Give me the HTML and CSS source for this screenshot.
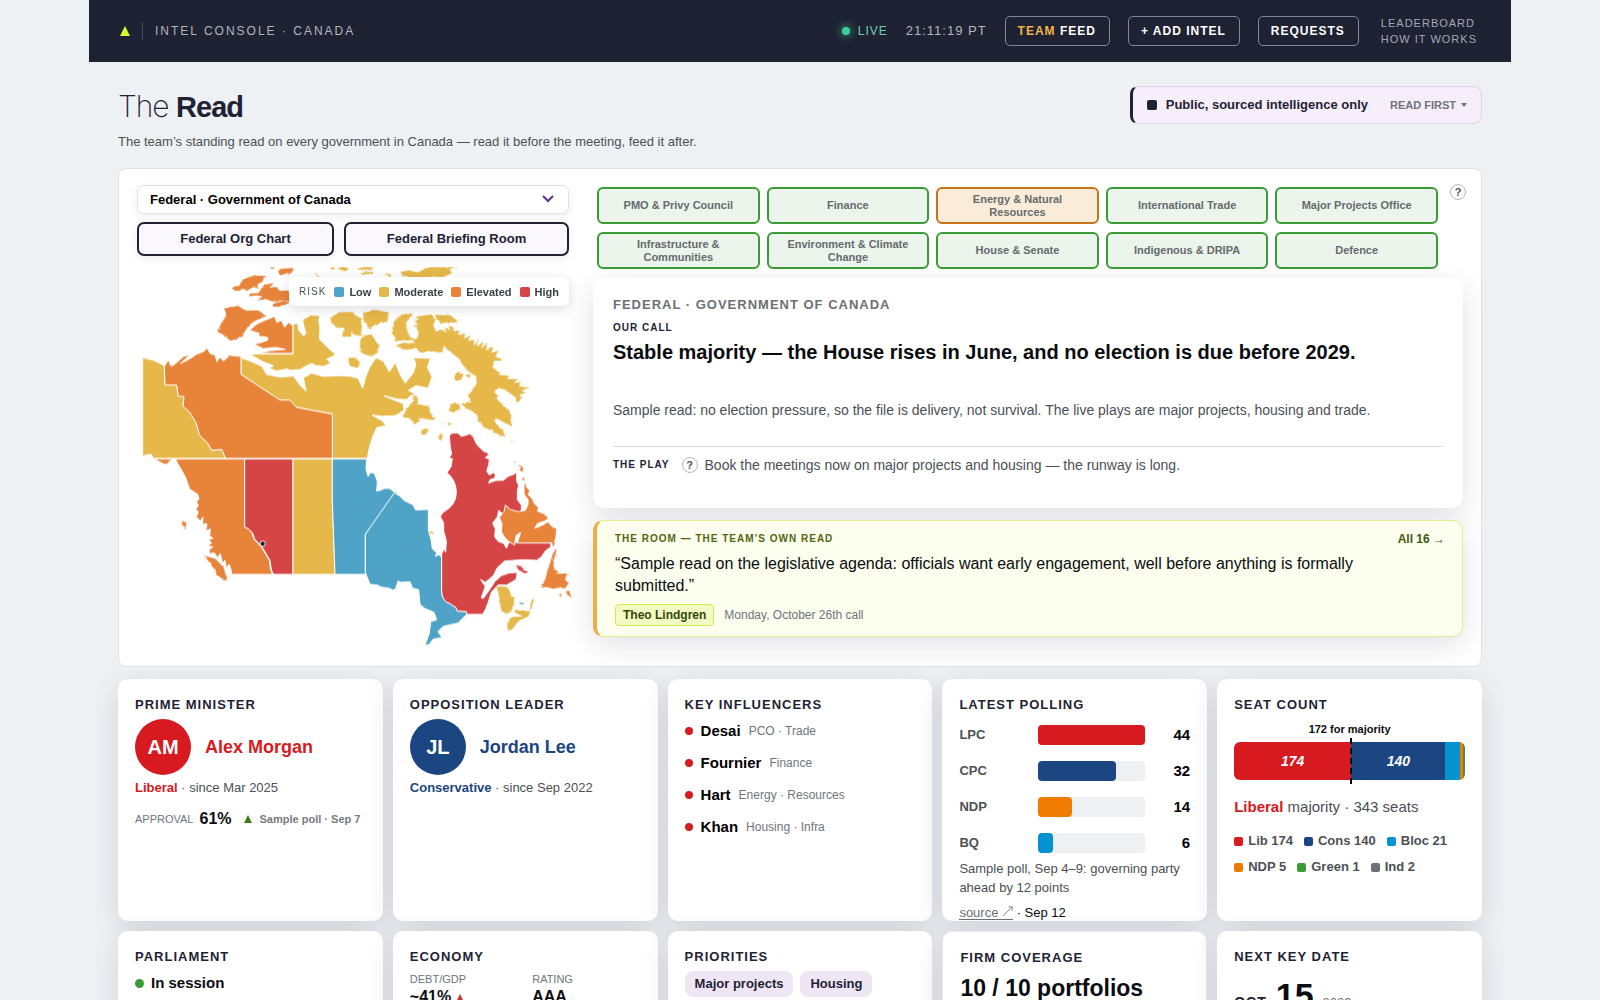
FILE: index.html
```html
<!DOCTYPE html>
<html lang="en">
<head>
<meta charset="utf-8">
<meta name="viewport" content="width=device-width, initial-scale=1">
<title>Intel Console · Canada</title>
<link rel="stylesheet" href="styles.css">
</head>
<body>
<div class="shell">
  <header class="topbar">
    <div class="brand">
      <svg class="brand-mark" viewBox="0 0 10 10" aria-hidden="true"><path d="M5 0 10 10H0Z"/></svg>
      <span class="brand-name">INTEL CONSOLE · CANADA</span>
    </div>
    <div class="top-actions">
      <span class="live"><i class="live-dot"></i>LIVE</span>
      <span class="clock">21:11:19 PT</span>
      <button class="top-btn" type="button"><span class="gold">TEAM</span> FEED</button>
      <button class="top-btn" type="button">+ ADD INTEL</button>
      <button class="top-btn" type="button">REQUESTS</button>
      <nav class="top-links"><a href="#leaderboard">LEADERBOARD</a><a href="#how">HOW IT WORKS</a></nav>
    </div>
  </header>

  <main class="content">
    <div class="intro">
      <div>
        <h1>The <b>Read</b></h1>
        <p class="lede">The team’s standing read on every government in Canada — read it before the meeting, feed it after.</p>
      </div>
      <button class="notice" type="button">
        <i class="notice-mark"></i><span class="notice-text">Public, sourced intelligence only</span>
        <span class="notice-more">READ FIRST</span><i class="caret"></i>
      </button>
    </div>

    <section class="panel">
      <div class="left">
        <div class="picker">
          <select aria-label="Government"><option>Federal · Government of Canada</option></select>
          <svg class="chevron" viewBox="0 0 12 8" aria-hidden="true"><path d="M1 1l5 5 5-5"/></svg>
        </div>
        <div class="pair">
          <button class="outline" type="button">Federal Org Chart</button>
          <button class="outline" type="button">Federal Briefing Room</button>
        </div>
        <div class="map">
          <svg class="canada" viewBox="51 18 1296 1152" role="img" aria-label="Risk by province and territory">
            <defs>
              <filter id="coast" x="-5%" y="-5%" width="110%" height="110%">
                <feTurbulence type="fractalNoise" baseFrequency="0.09" numOctaves="2" seed="4"/>
                <feDisplacementMap in="SourceGraphic" scale="8" xChannelSelector="R" yChannelSelector="G"/>
              </filter>
            </defs>
            <g filter="url(#coast)">
              <g class="elevated">
                <path d="M474 30l10-7 35-2 0 10-10 8-30 2zM448 14l12 2 4 8-10-2zM338 78l20-4 12-20 30-10 34 0-6 18-16 8 2 12-14-4-20 12-8-8-16 8-14-2zM388 98l28-2-2 6-26 4zM412 100l20-28 30-6-14 14 18-2 14 12 24-2 10 8-4 26-24-4-26 4-24-8-24 4 14-12-16-2zM460 128l30-8 18 4-30 14-20-2z"/>
                <path d="M312 142L355 135 378 150 390 148 415 148 438 165 400 182 378 205 366 228 330 240 318 226 292 212 302 190 318 165Z"/>
              </g>
              <g class="moderate">
                <path d="M582 34l4 2 14 10-6 2zM630 20l8-2 8 4-10 4zM654 22l14-6 18 6-6 8-18 0zM710 22l30-4 24 2-12 6-38 0zM722 34l36-2 4 6-36 2zM796 38l14 2 6 8-12-2zM842 32l24-4 28 6 22-12 18-4h85l-28 4 2 16-30 12-28-4-18 10-22-4-14 6-8-10-28-4z"/>
                <path d="M632 170l24-16 40-2 18 16 12 4-6 20-26 14 0 20-28 0 6-26-22 0-16-16zM730 155l34-8 42 7-4 28-36 8-18 14-16-22zM720 240l8-16 26-4 12 18 12 16-6 22-20 10-28-10-4-20zM690 170l16-4 20 24-4 36-22-6-10-14zM684 290l22 0 14 14-8 18-24-8z"/>
                <path transform="translate(690 0)" d="M125 215L130 188 142 168 162 160 190 158 180 170 168 185 170 205 178 222 192 236 202 232 206 215 200 198 186 196 206 190 190 180 208 176 196 168 222 163 244 160 256 175 250 195 258 212 272 205 290 215 284 200 300 205 296 194 312 200 308 208 330 210 326 222 346 218 340 232 362 226 352 240 372 236 372 256 386 232 382 258 400 240 394 264 412 246 408 270 430 256 424 276 445 268 436 286 460 298 432 300 428 320 450 336 446 342 478 344 470 354 502 354 492 366 512 364 506 376 538 380 514 388 528 396 508 400 518 412 500 424 496 408 480 398 466 386 446 380 432 392 444 404 440 412 456 430 476 446 484 464 482 478 486 496 462 484 440 472 430 478 448 496 460 512 466 528 446 520 424 508 404 500 392 484 384 482 382 464 366 450 344 440 362 428 360 414 352 402 366 390 380 366 378 346 362 336 342 318 326 292 300 272 282 256 276 276 240 270 212 276 200 262 170 266 150 262 138 252 160 246 196 246 184 238 132 240 138 232Z"/>
                <path d="M944 162l44 0 20 14 6 8-36 0-16 4zM1004 340l14-8 10 8-4 16-16 4-6-8zM988 434l18-10 12 8 4 14-14 2-8 8-12-10zM1024 428l22-6 12 10-22 8zM1038 340l12 0 2 6-14 0zM904 510l14-8 10 4-12 14-12 2zM956 524l8-6 4 6-4 14-8-4zM982 488l8-4 4 4-8 6zM1172 540l6 2-2 4z"/>
                <path d="M880 400L892 408 895 430 925 435 930 455 948 475 915 475 905 470 885 490 868 470 848 470 860 440 878 425Z"/>
              </g>
              <path class="elevated" d="M182 780l10 2 8 4-4 8 0 14-6-12zM253 884l34 10 24 26 10 34-4 6-24-16-10-20z"/>
              <path class="elevated" d="M1302 866L1310 870 1300 900 1303 925 1316 932 1308 938 1330 938 1342 935 1335 955 1346 965 1336 982 1320 978 1300 984 1280 978 1264 980 1272 962 1278 948 1284 925 1292 900ZM1338 990l10 0 6 20-10-4zM1316 1002l8-4 2 4-10 4z"/>
              <path class="moderate" d="M1130 978L1150 975 1166 982 1172 1000 1184 1010 1180 1040 1164 1058 1144 1052 1138 1010ZM1160 1108L1163 1085 1176 1068 1210 1066 1186 1056 1184 1046 1205 1050 1230 1050 1226 1066 1200 1077 1186 1090 1176 1106ZM1234 1020l8-10-4 24-10 18zM928 810l12 4 2 6-12-4z"/>
              <path class="high" d="M1188 912l14 4 22 18-10 4-20-14z"/>
              <path class="low" d="M1196 1024l14 2 2 4-12-2zM922 1042l8 2-2 6z"/>
            </g>
            <g class="borders">
              <path class="elevated" d="M388 208l24-20 22-10 30-12 6 18 14-6 10 20 12-14 13 10V277H412l40-8 44-4-30-6-36 4-30-14 22-4 22-8-2-8-28-4 4-8z"/>
              <path class="moderate" d="M519 190L533 186 537 208 550 224 558 218 550 190 548 176 572 162 600 164 596 178 600 200 598 234 622 258 636 272 646 276 640 286 620 294 632 306 612 316 588 314 576 308 560 314 540 326 514 328 500 324 470 330 448 322 460 314 428 302 408 290 390 282 402 279H519Z"/>
              <path class="moderate" d="M363 290L395 302 425 315 440 340 480 348 520 345 540 372 558 390 550 350 575 336 610 346 650 344 690 345 715 352 728 382 736 350 748 320 768 290 790 300 808 332 826 304 840 340 856 366 880 335 888 310 880 290 932 292 922 318 936 348 924 382 888 374 866 388 890 402 872 404 860 416 830 414 792 404 820 416 850 428 852 448 826 464 790 466 756 462 788 480 798 494 770 500 758 528 748 560 742 592H637V459L530 439 510 418H480L363 340Z"/>
              <path class="moderate" d="M68 290l34 8 20 10 11 6 2 57h35l5 33h17l-3 30 21 20 18 30 10 37 24 23 13 24 30-3 12 27H100l-6-12-16 2-10 4Z"/>
              <path class="elevated" d="M133 316l12-20 8 20 10-6 28-24 20-6-30 28 34-18 14-10 6-2 18-8 8-10 10 18 14 4 6 20 8-14 12 12 16-16-8-8 16 8 28 2V340L480 417H510L530 439 637 459V592H317L305 565l-30 3-13-23-24-23-10-37-18-30-21-20 3-29h-17l-5-34h-35Z"/>
              <path class="elevated" d="M103 594H374V798l12 6 10 12 6 18 22 24 10 16 14 24 4 28 6 14H333l2-10-8-20-8 12-4-24-8 8-6-28-8 12-10-14-14 2-2-12 12-8-16-4 12-8-10-10 14-4-10-8 2-20-14 6 4-22-14 2 2-22-8 12-12-12 6-16-8-6 8-14-6-10 8-8-4-14-24-16-12-34-14-26-12-20-6-12-16 8-8 10-8 0Z"/>
              <path class="high" d="M374 594H519V940H460l-6-14-4-28-14-24-10-16-22-24-6-18-12-12-12-6Z"/>
              <path class="moderate" d="M519 594H637V720L645 940H519Z"/>
              <path class="low" d="M637 594H740l-2 30 6 22 8-12 12 4 8 24-2 28 10-2 14-6 14 0 14 10 11 3L736 820V940H645L637 720Z"/>
              <path class="low" d="M823 695l16 10 14 14 26 12 8 16 38-2 0 26 0 36 8 28 4 28 14 14-6 8 12-4 8 8V990q0 30 25 38l18 12 4 10 28 2v8l-26 26-44 10-16 16 12 18-26 4-12 16-14 4 8-20 6-18 4-34 18-6-8-22-28-12-14-12-4-44-18-4-8-20-26 2-10-4-6 20-8 8-12-6-24-4-12-6-22-2L736 935V820Z"/>
              <path class="high" d="M988 524l8-8 18 0 10 10 14-4 12-4 10 10 10 22 8 8 14 14 10 2 4 8-10 8 12 4-2 18-6 18 8 12 14-8 4 8-2 10-14 4-4 10 22-8 22 0 14-12 16-6 10-6 0 26 6 14-4 14 0 28 12 16 0 14-8 18-20 4-24-6-16-14-4 20-14 18 8 18-2 24 12 14 14 4 10 16 6-18H1292V858l-16 12-12 18-14 10-40-2-56 4-22 20-12 24-24 20-14-8 14 20-12 34 6 2 20-28 14-22 20-18 22-8 26-2-4 22-28 16-26 0-20 22-10 32-8 20-8 14H1040V1052l-28-2-4-10-18-12q-25-8-25-38V878l8-16 4 12 2-34-8-30 0-24-10-20 8-12q40-22 40-59t-28-60l12-18 4-24-10-2 8-12-4-20Z"/>
              <path class="elevated" d="M1180 604l6-6 4 12 12 10-6 8 14 6 0 14-6 6 12 8 4 16 10 12-6 10 14 14 4 12 14 14-4 10 20 8 14 14-12 8-22 8-8 14 24-10 16-10 14 16 12 4-2 26-4 14 2 8-10 10V846H1192l10-32-14 10-4 28-14-8-14-12-12-20 2-24-8-18 14-18 4-20 16 14 24 6 20-4 8-18 0-14-12-16 0-28 4-14-6-14 0-26-10-6z"/>
            </g>
            <circle class="pin" cx="428" cy="848" r="8"/>
          </svg>
          <ul class="legend">
            <li class="legend-title">RISK</li>
            <li><i class="swatch sw-low"></i>Low</li>
            <li><i class="swatch sw-moderate"></i>Moderate</li>
            <li><i class="swatch sw-elevated"></i>Elevated</li>
            <li><i class="swatch sw-high"></i>High</li>
          </ul>
        </div>
      </div>

      <div class="right">
        <div class="files">
          <button class="file" type="button">PMO &amp; Privy Council</button>
          <button class="file" type="button">Finance</button>
          <button class="file warn" type="button">Energy &amp; Natural Resources</button>
          <button class="file" type="button">International Trade</button>
          <button class="file" type="button">Major Projects Office</button>
          <button class="file" type="button">Infrastructure &amp; Communities</button>
          <button class="file" type="button">Environment &amp; Climate Change</button>
          <button class="file" type="button">House &amp; Senate</button>
          <button class="file" type="button">Indigenous &amp; DRIPA</button>
          <button class="file" type="button">Defence</button>
        </div>
        <article class="call">
          <h2>FEDERAL · GOVERNMENT OF CANADA</h2>
          <p class="tag">OUR CALL</p>
          <p class="headline">Stable majority — the House rises in June, and no election is due before 2029.</p>
          <p class="body">Sample read: no election pressure, so the file is delivery, not survival. The live plays are major projects, housing and trade.</p>
          <div class="play">
            <span class="tag">THE PLAY</span>
            <button class="help" type="button" aria-label="About the play">?</button>
            <span class="play-text">Book the meetings now on major projects and housing — the runway is long.</span>
          </div>
        </article>
        <article class="room">
          <div class="room-head"><h3>THE ROOM — THE TEAM’S OWN READ</h3><a href="#all">All 16 →</a></div>
          <blockquote>“Sample read on the legislative agenda: officials want early engagement, well before anything is formally submitted.”</blockquote>
          <div class="byline"><span class="author">Theo Lindgren</span><span>Monday, October 26th call</span></div>
        </article>
      </div>
      <button class="help corner" type="button" aria-label="About portfolios">?</button>
    </section>

    <section class="stats">
      <article class="card">
        <h3>PRIME MINISTER</h3>
        <div class="person"><span class="avatar bg-lib">AM</span><span class="lib">Alex Morgan</span></div>
        <p class="since"><b class="lib">Liberal</b> · since Mar 2025</p>
        <p class="approval"><span class="ap-label">APPROVAL</span><b>61%</b><svg class="up" viewBox="0 0 8 8" aria-hidden="true"><path d="M4 0 8 8H0Z"/></svg><span class="ap-src">Sample poll · Sep 7</span></p>
      </article>
      <article class="card">
        <h3>OPPOSITION LEADER</h3>
        <div class="person"><span class="avatar bg-con">JL</span><span class="con">Jordan Lee</span></div>
        <p class="since"><b class="con">Conservative</b> · since Sep 2022</p>
      </article>
      <article class="card">
        <h3>KEY INFLUENCERS</h3>
        <ul class="people">
          <li><b>Desai</b><span>PCO · Trade</span></li>
          <li><b>Fournier</b><span>Finance</span></li>
          <li><b>Hart</b><span>Energy · Resources</span></li>
          <li><b>Khan</b><span>Housing · Infra</span></li>
        </ul>
      </article>
      <article class="card">
        <h3>LATEST POLLING</h3>
        <div class="polls">
          <div class="poll"><span>LPC</span><i class="track"><i class="bar bg-lib" style="width:100%"></i></i><b>44</b></div>
          <div class="poll"><span>CPC</span><i class="track"><i class="bar bg-con" style="width:73%"></i></i><b>32</b></div>
          <div class="poll"><span>NDP</span><i class="track"><i class="bar bg-ndp" style="width:32%"></i></i><b>14</b></div>
          <div class="poll"><span>BQ</span><i class="track"><i class="bar bg-bq" style="width:14%"></i></i><b>6</b></div>
        </div>
        <p class="poll-note">Sample poll, Sep 4–9: governing party ahead by 12 points</p>
        <p class="source"><a href="#source">source <svg viewBox="0 0 14 14" aria-hidden="true"><path d="M1 13 13 1M8 1h5v5"/></svg></a> · Sep 12</p>
      </article>
      <article class="card">
        <h3>SEAT COUNT</h3>
        <div class="seats">
          <p class="majority">172 for majority</p>
          <div class="seatbar">
            <span class="bg-lib" style="flex-grow:174">174</span><span class="bg-con" style="flex-grow:140">140</span><span class="bg-bq" style="flex-grow:21"></span><span class="bg-ndp" style="flex-grow:5"></span><span class="bg-grn" style="flex-grow:1"></span><span class="bg-ind" style="flex-grow:2"></span>
          </div>
        </div>
        <p class="outcome"><b class="lib">Liberal</b> majority · 343 seats</p>
        <ul class="seat-key">
          <li><i class="bg-lib"></i>Lib 174</li><li><i class="bg-con"></i>Cons 140</li><li><i class="bg-bq"></i>Bloc 21</li>
          <li><i class="bg-ndp"></i>NDP 5</li><li><i class="bg-grn"></i>Green 1</li><li><i class="bg-ind"></i>Ind 2</li>
        </ul>
      </article>
      <article class="card">
        <h3>PARLIAMENT</h3>
        <p class="session">In session</p>
      </article>
      <article class="card">
        <h3>ECONOMY</h3>
        <dl class="econ">
          <div><dt>DEBT/GDP</dt><dd>~41% <svg class="down" viewBox="0 0 8 8" aria-hidden="true"><path d="M4 0 8 8H0Z"/></svg></dd></div>
          <div><dt>RATING</dt><dd>AAA</dd></div>
        </dl>
      </article>
      <article class="card">
        <h3>PRIORITIES</h3>
        <ul class="chips"><li>Major projects</li><li>Housing</li></ul>
      </article>
      <article class="card framed">
        <h3>FIRM COVERAGE</h3>
        <p class="coverage">10 / 10 portfolios</p>
      </article>
      <article class="card">
        <h3>NEXT KEY DATE</h3>
        <p class="date"><span class="month">OCT</span><b>15</b><span class="year">2029</span></p>
      </article>
    </section>
  </main>
</div>
</body>
</html>
```
FILE: styles.css
```css
:root {
  --ink: #1e2233;
  --text: #0b0c10;
  --body: #4c5055;
  --muted: #70757c;
  --lib: #d71920;
  --con: #1b4682;
  --ndp: #ef7c00;
  --bq: #0492d0;
  --green: #3a9b35;
  --low: #4fa3c7;
  --moderate: #e6b84a;
  --elevated: #e8833a;
  --high: #d64545;
  --shadow: 0 8px 28px rgba(30, 34, 51, .13);
}
* { box-sizing: border-box; }
html { scrollbar-width: none; }
body {
  margin: 0;
  background: #edf1f4;
  color: var(--text);
  font: 13px/18px "Liberation Sans", Arial, sans-serif;
}
h1, h2, h3, p, ul, dl, dd, blockquote { margin: 0; padding: 0; }
ul { list-style: none; }
button, select { font: inherit; color: inherit; margin: 0; }
i { font-style: normal; }
.shell { max-width: 1422px; margin: 0 auto; }

.topbar {
  display: flex;
  align-items: center;
  justify-content: space-between;
  height: 62px;
  padding: 0 34px 0 31px;
  background: var(--ink);
  color: #b2b5be;
}
.brand { display: flex; align-items: center; }
.brand-mark { width: 10px; height: 10px; fill: #d4ff2e; }
.brand-name { margin-left: 12px; padding-left: 12px; border-left: 1px solid #4a4e5c; font-size: 12px; letter-spacing: 2px; }
.top-actions { display: flex; align-items: center; gap: 18px; }
.live { display: flex; align-items: center; gap: 8px; color: #6fd0b0; font-size: 12px; letter-spacing: 1px; }
.live-dot { width: 8px; height: 8px; border-radius: 50%; background: #3ccf98; box-shadow: 0 0 8px #3ccf98; }
.clock { letter-spacing: 1px; }
.top-btn {
  height: 30px;
  padding: 0 13px 0 12px;
  border: 1px solid #858893;
  border-radius: 5px;
  background: none;
  color: #fff;
  font-size: 12px;
  font-weight: 700;
  letter-spacing: 1px;
}
.gold { color: #efb34c; }
.top-links { display: flex; flex-direction: column; margin-left: 4px; font-size: 11px; line-height: 16px; letter-spacing: 1px; }
.top-links a { color: #a5a8b2; text-decoration: none; }

.content { padding: 24px 29px 40px; }
.intro { display: flex; justify-content: space-between; align-items: flex-start; }
h1 { font: 200 30px/40px Inter, "Liberation Sans", sans-serif; letter-spacing: -1px; color: var(--ink); }
h1 b { font: 700 29px/40px "Liberation Sans", Arial, sans-serif; letter-spacing: -1px; }
.lede { margin-top: 6px; line-height: 18px; color: var(--body); }
.notice {
  display: flex;
  align-items: center;
  height: 38px;
  padding: 0 14px;
  border: 1px solid #e3d3ea;
  border-left: 3px solid var(--ink);
  border-radius: 8px;
  background: #f6eefa;
}
.notice-mark { width: 10px; height: 10px; margin-right: 9px; border-radius: 2px; background: var(--ink); }
.notice-text { font-weight: 700; color: var(--ink); }
.notice-more { margin-left: 22px; font-size: 11px; font-weight: 700; color: var(--muted); }
.caret { margin-left: 5px; border: 3px solid transparent; border-top: 4px solid var(--muted); border-bottom: 0; }

.panel {
  position: relative;
  display: grid;
  grid-template-columns: minmax(0, 432fr) minmax(0, 870fr);
  gap: 24px;
  margin-top: 17px;
  padding: 16px 18px 15px;
  border: 1px solid #dde1e6;
  border-radius: 8px;
  background: #fff;
}
.picker { position: relative; }
.picker select {
  display: block;
  width: 100%;
  height: 29px;
  padding: 0 12px;
  border: 1px solid #dfe2e9;
  border-radius: 7px;
  background: #fff;
  font-weight: 700;
  color: #000;
  appearance: none;
  box-shadow: 0 3px 10px rgba(30, 34, 51, .07);
}
.chevron { position: absolute; top: 10px; right: 15px; width: 12px; height: 8px; fill: none; stroke: #5c2d91; stroke-width: 2; }
.pair { display: grid; grid-template-columns: 197fr 225fr; gap: 10px; margin-top: 8px; }
.outline {
  height: 34px;
  padding: 0;
  border: 2px solid var(--ink);
  border-radius: 7px;
  background: #faf8fd;
  color: var(--ink);
  font-weight: 700;
  box-shadow: 0 3px 10px rgba(30, 34, 51, .07);
}
.map { position: relative; margin-top: 11px; }
.canada { display: block; width: 100%; overflow: visible; clip-path: inset(0 -10px -10px 0); }
.low { fill: var(--low); }
.moderate { fill: var(--moderate); }
.elevated { fill: var(--elevated); }
.high { fill: var(--high); }
.borders path { stroke: #fff; stroke-width: 3; stroke-linejoin: round; }
.pin { fill: #14161f; stroke: #fff; stroke-width: 3; }
.legend {
  position: absolute;
  top: 10px;
  right: 0;
  display: flex;
  align-items: center;
  gap: 8px;
  height: 29px;
  padding: 0 10px;
  border-radius: 7px;
  background: rgba(255, 255, 255, .96);
  box-shadow: 0 3px 12px rgba(30, 34, 51, .16);
  font-size: 11px;
  font-weight: 700;
  color: #3d4046;
}
.legend li { display: flex; align-items: center; gap: 5px; }
.legend .legend-title { font-weight: 400; font-size: 10px; letter-spacing: 1px; color: var(--body); }
.swatch { width: 10px; height: 10px; border-radius: 2px; }
.sw-low { background: var(--low); }
.sw-moderate { background: var(--moderate); }
.sw-elevated { background: var(--elevated); }
.sw-high { background: var(--high); }

.files { display: grid; grid-template-columns: repeat(5, minmax(0, 1fr)); gap: 8px 7px; padding: 2px 25px 0 4px; }
.file {
  height: 37px;
  padding: 0 16px;
  border: 2px solid var(--green);
  border-radius: 6px;
  background: #ecf5ec;
  color: #656b6d;
  font-size: 11px;
  line-height: 13px;
  font-weight: 700;
}
.file.warn { border-color: #c57416; background: #fbebd9; }
.help {
  width: 16px;
  height: 16px;
  padding: 0;
  border: 1px solid #b3b7bc;
  border-radius: 50%;
  background: #fff;
  color: var(--body);
  font-size: 11px;
  line-height: 14px;
  font-weight: 700;
}
.corner { position: absolute; top: 15px; right: 15px; }
.call { margin-top: 9px; height: 230px; padding: 17px 20px; border-radius: 12px; background: #fff; box-shadow: var(--shadow); }
.call h2 { font-size: 13px; line-height: 20px; letter-spacing: 1px; color: #6c7075; }
.tag { font-size: 10px; line-height: 14px; font-weight: 700; letter-spacing: 1px; color: var(--ink); }
.call > .tag { margin-top: 6px; }
.headline { margin-top: 4px; font-size: 20px; line-height: 26px; font-weight: 700; }
.body { margin-top: 34px; font-size: 14px; line-height: 22px; color: var(--body); }
.play { display: flex; align-items: center; margin-top: 25px; padding-top: 8px; border-top: 1px solid #d8dbdf; font-size: 14px; line-height: 20px; color: var(--body); }
.play .help { margin: 0 7px 0 12px; }
.room {
  margin-top: 12px;
  padding: 9px 17px 10px 18px;
  border: 1px solid #dff08f;
  border-left: 4px solid #e9b04a;
  border-radius: 10px;
  background: #fcfeee;
  box-shadow: var(--shadow);
}
.room-head { display: flex; justify-content: space-between; }
.room-head h3 { font-size: 10px; line-height: 18px; letter-spacing: 1px; color: #52660f; }
.room-head a { font-size: 12px; font-weight: 700; color: #435a0c; text-decoration: none; }
blockquote { margin-top: 5px; padding-right: 60px; font-size: 16px; line-height: 22px; }
.byline { display: flex; align-items: center; gap: 10px; margin-top: 7px; font-size: 12px; color: var(--muted); }
.author { padding: 1px 7px; border: 1px solid #d4ec4a; border-radius: 4px; background: #f2fbc4; font-weight: 700; line-height: 18px; color: #36470b; }

.stats { display: grid; grid-template-columns: repeat(5, minmax(0, 1fr)); grid-auto-rows: 242px; gap: 10px; margin-top: 12px; }
.card { padding: 17px 17px 0; border-radius: 10px; background: #fff; box-shadow: var(--shadow); overflow: hidden; }
.card h3 { font-size: 13px; line-height: 18px; letter-spacing: 1px; color: var(--ink); }
.framed { border: 1px solid #ece5f4; }
.person { display: flex; align-items: center; gap: 14px; margin-top: 5px; font-size: 18px; font-weight: 700; }
.avatar { display: grid; place-items: center; width: 56px; height: 56px; border-radius: 50%; font-size: 20px; color: #fff; }
.lib { color: var(--lib); }
.con { color: var(--con); }
.since { margin-top: 4px; color: var(--body); }
.approval { display: flex; align-items: center; margin-top: 13px; white-space: nowrap; }
.ap-label { font-size: 11px; color: var(--muted); }
.approval b { margin-left: 6px; font-size: 16px; }
.up { width: 8px; height: 8px; margin: 0 8px 0 12px; fill: #3a7d14; }
.ap-src { font-size: 11px; font-weight: 700; color: #777b80; }
.people { display: grid; gap: 12px; margin-top: 7px; }
.people li { display: flex; align-items: center; gap: 8px; line-height: 20px; font-size: 12px; color: var(--muted); }
.people li::before { content: ""; width: 8px; height: 8px; border-radius: 50%; background: var(--lib); }
.people b { font-size: 15px; color: #000; }
.polls { display: grid; gap: 16px; margin-top: 11px; }
.poll { display: grid; grid-template-columns: 79px minmax(0, 107fr) minmax(0, 46fr); align-items: center; height: 20px; font-weight: 700; color: var(--body); }
.poll b { text-align: right; font-size: 15px; color: #000; }
.track { height: 20px; border-radius: 4px; background: #edf1f4; }
.bar { display: block; height: 20px; border-radius: 4px; }
.bg-lib { background: var(--lib); }
.bg-con { background: var(--con); }
.bg-ndp { background: var(--ndp); }
.bg-bq { background: var(--bq); }
.bg-grn { background: var(--green); }
.bg-ind { background: #6b7076; }
.poll-note { margin-top: 6px; line-height: 19px; color: var(--body); }
.source { margin-top: 8px; line-height: 16px; }
.source a { display: inline-block; line-height: 13px; border-bottom: 1px solid; color: #6c7075; text-decoration: none; }
.source svg { width: 11px; height: 11px; fill: none; stroke: currentColor; }
.seats { position: relative; margin-top: 6px; }
.majority { font-size: 11px; line-height: 18px; font-weight: 700; text-align: center; }
.seatbar { display: flex; height: 38px; margin-top: 4px; border-radius: 6px; overflow: hidden; }
.seatbar span { flex: 0 1 0; display: grid; place-items: center; min-width: 0; font-size: 14px; font-weight: 700; font-style: italic; color: #fff; }
.seats::after { content: ""; position: absolute; left: 50%; bottom: -4px; height: 46px; border-left: 2px dashed #000; }
.outcome { margin-top: 17px; font-size: 15px; line-height: 20px; color: var(--body); }
.seat-key { display: flex; flex-wrap: wrap; gap: 8px 11px; margin-top: 15px; font-weight: 700; color: var(--body); }
.seat-key li { display: flex; align-items: center; gap: 5px; }
.seat-key i { width: 9px; height: 9px; border-radius: 2px; }
.session { display: flex; align-items: center; gap: 7px; margin-top: 7px; font-size: 15px; line-height: 20px; font-weight: 700; }
.session::before { content: ""; width: 9px; height: 9px; border-radius: 50%; background: var(--green); }
.econ { display: grid; grid-template-columns: 1fr 1fr; gap: 14px; margin-top: 5px; }
.econ dt { font-size: 11px; line-height: 16px; color: var(--muted); }
.econ dd { font-size: 16px; line-height: 20px; font-weight: 700; }
.down { width: 8px; height: 8px; fill: #c93636; }
.chips { display: flex; gap: 7px; margin-top: 5px; }
.chips li { padding: 4px 10px; border-radius: 8px; background: #eee6f5; font-weight: 700; line-height: 18px; color: var(--ink); }
.coverage { margin-top: 8px; font-size: 23px; line-height: 26px; font-weight: 700; }
.date { display: flex; align-items: baseline; gap: 9px; margin-top: 9px; }
.month { font-size: 14px; font-weight: 700; letter-spacing: 1px; color: var(--ink); }
.date b { font-size: 34px; line-height: 40px; }
.year { color: var(--muted); }
```
